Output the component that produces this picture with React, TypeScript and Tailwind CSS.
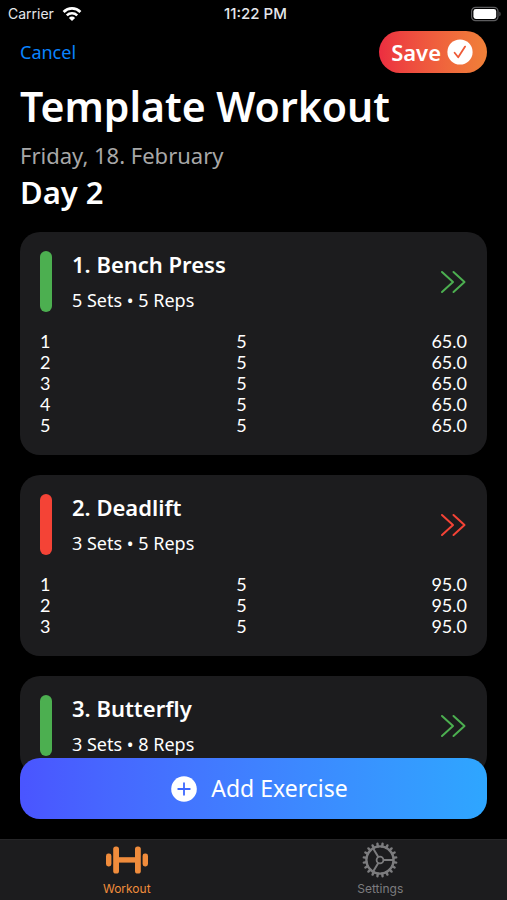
import React from "react";

type WorkoutSet = { reps: number; weight: string };

type Exercise = {
  name: string;
  sets: number;
  reps: number;
  accent: "green" | "red";
  rows: WorkoutSet[];
};

const exercises: Exercise[] = [
  {
    name: "Bench Press",
    sets: 5,
    reps: 5,
    accent: "green",
    rows: Array.from({ length: 5 }, () => ({ reps: 5, weight: "65.0" })),
  },
  {
    name: "Deadlift",
    sets: 3,
    reps: 5,
    accent: "red",
    rows: Array.from({ length: 3 }, () => ({ reps: 5, weight: "95.0" })),
  },
  { name: "Butterfly", sets: 3, reps: 8, accent: "green", rows: [] },
];

const accents = {
  green: { bar: "bg-[#4caf50]", icon: "text-[#4caf50]" },
  red: { bar: "bg-[#f44336]", icon: "text-[#f44336]" },
};

const StatusBar = () => (
  <div className="grid grid-cols-3 items-center h-7 pl-2 pr-1 font-['Inter',sans-serif] text-sm text-gray-200">
    <div className="flex items-center gap-2">
      <span>Carrier</span>
      <svg viewBox="0 0 20 15" className="w-5 h-4 text-white" fill="none" stroke="currentColor">
        <path d="M1.6 5.4a12 12 0 0 1 16.8 0" strokeWidth="2.8" />
        <path d="M4.8 8.8a7.4 7.4 0 0 1 10.4 0" strokeWidth="2.5" />
        <path d="M10 14.6 6.9 11.4a4.4 4.4 0 0 1 6.2 0Z" fill="currentColor" stroke="none" />
      </svg>
    </div>
    <span className="text-center text-[15px] font-medium">11:22 PM</span>
    <svg viewBox="0 0 32 15" className="w-8 h-4 justify-self-end" fill="none">
      <rect x="0.6" y="0.8" width="26.4" height="13.4" rx="4" stroke="#5c5c5e" strokeWidth="1.2" />
      <rect x="2.4" y="2.6" width="22.8" height="9.8" rx="2.4" fill="#fff" />
      <path d="M28.4 5.2c1.6.5 1.6 4.1 0 4.6Z" fill="#5c5c5e" />
    </svg>
  </div>
);

const CheckCircle = () => (
  <svg viewBox="0 0 26 26" className="w-[26px] h-[26px]" fill="none">
    <circle cx="13" cy="13" r="12.6" fill="#fff" />
    <path d="m7.6 13.8 3.6 4.4 6.9-10.6" stroke="#ee5a37" strokeWidth="1.8" strokeLinecap="round" strokeLinejoin="round" />
  </svg>
);

const PlusCircle = () => (
  <svg viewBox="0 0 26 26" className="w-[26px] h-[26px]" fill="none">
    <circle cx="13" cy="13" r="12.8" fill="#fff" />
    <path d="M13 7.2v11.6M7.2 13h11.6" stroke="#3d68ff" strokeWidth="1.8" strokeLinecap="round" />
  </svg>
);

const DoubleChevron = () => (
  <svg viewBox="0 0 26 24" className="w-[26px] h-6" fill="none" stroke="currentColor" strokeWidth="2" strokeLinecap="round" strokeLinejoin="round">
    <path d="m2 2 11 10L2 22M13.5 2l11 10-11 10" />
  </svg>
);

const Dumbbell = () => (
  <svg viewBox="0 0 42 28" className="w-[42px] h-7" fill="currentColor">
    <rect x="0" y="7.6" width="5.4" height="12.8" rx="2.4" />
    <rect x="7.2" y="0.4" width="5.8" height="27.2" rx="2.6" />
    <rect x="11" y="11.2" width="20" height="5.4" />
    <rect x="29" y="0.4" width="5.8" height="27.2" rx="2.6" />
    <rect x="36.6" y="7.6" width="5.4" height="12.8" rx="2.4" />
  </svg>
);

const Gear = () => (
  <svg viewBox="0 0 36 36" className="w-9 h-9" fill="none" stroke="currentColor">
    <circle cx="18" cy="18" r="13.6" strokeWidth="2.4" />
    <circle cx="18" cy="18" r="3.4" strokeWidth="1.8" />
    <path d="M21.4 18h10.4M16.3 15 11 6.2M16.3 21 11 29.8" strokeWidth="2" />
    {Array.from({ length: 20 }, (_, i) => (
      <path key={i} d="M18 1.6v2.8" strokeWidth="2.4" strokeLinecap="round" transform={`rotate(${i * 18 + 9} 18 18)`} />
    ))}
  </svg>
);

const ExerciseCard = ({ exercise, index }: { exercise: Exercise; index: number }) => {
  const accent = accents[exercise.accent];

  return (
    <li className="flex flex-col gap-[19px] px-5 py-[19px] rounded-[20px] bg-[#1c1c1e]">
      <div className="flex">
        <div className={`w-3 h-[61px] rounded-full ${accent.bar}`} />
        <div className="flex-1 ml-5 flex flex-col gap-[11px]">
          <h3 className="text-[22px] leading-[26px] font-semibold">
            {index + 1}. {exercise.name}
          </h3>
          <p className="text-[18px] leading-6">
            {exercise.sets} Sets • {exercise.reps} Reps
          </p>
        </div>
        <button className={`px-px ${accent.icon}`} aria-label={`Open ${exercise.name}`}>
          <DoubleChevron />
        </button>
      </div>

      {exercise.rows.length > 0 && (
        <table className="w-full font-['Lato',sans-serif] text-[18px] leading-[21px]">
          <tbody>
            {exercise.rows.map((row, i) => (
              <tr key={i}>
                <td className="w-3 p-0">{i + 1}</td>
                <td className="p-0 text-center">{row.reps}</td>
                <td className="w-9 p-0 text-right">{row.weight}</td>
              </tr>
            ))}
          </tbody>
        </table>
      )}
    </li>
  );
};

const TabBar = () => (
  <nav className="grid grid-cols-2 h-[61px] bg-[#1c1c1e] border-t border-[#262628] font-['Inter',sans-serif] text-xs leading-4">
    <a href="#workout" className="flex flex-col items-center justify-between pt-[6px] pb-[3px] text-[#f08c3c]">
      <Dumbbell />
      Workout
    </a>
    <a href="#settings" className="flex flex-col items-center justify-between pt-[2px] pb-[3px] text-[#7c7c7e]">
      <Gear />
      Settings
    </a>
  </nav>
);

const App = () => {
  return (
    <div className="flex flex-col h-screen bg-black text-white font-['Noto_Sans',sans-serif]">
      <StatusBar />

      <main className="relative flex-1 min-h-0 overflow-hidden px-5">
        <div className="flex items-center justify-between pt-[3px]">
          <button className="text-[18px] leading-6 text-[#0a84ff]">Cancel</button>
          <button className="flex items-center gap-1.5 h-[42px] pl-3 pr-3.5 rounded-full bg-gradient-to-r from-[#ec2d40] to-[#f08038] text-[22px] font-semibold">
            Save
            <CheckCircle />
          </button>
        </div>

        <header className="pt-2">
          <h1 className="text-[41px] leading-[50px] font-semibold">Template Workout</h1>
          <p className="pt-2 text-[22px] leading-8 text-[#a8a8a8]">Friday, 18. February</p>
          <h2 className="text-[31px] leading-[42px] font-semibold">Day 2</h2>
        </header>

        <ul className="flex flex-col gap-5 pt-[19px]">
          {exercises.map((exercise, index) => (
            <ExerciseCard key={exercise.name} exercise={exercise} index={index} />
          ))}
        </ul>

        {/* Floats over the list, just above the tab bar */}
        <button className="absolute inset-x-5 bottom-5 flex items-center justify-center gap-3.5 h-[61px] pl-3 rounded-[20px] bg-gradient-to-r from-[#4a55ff] to-[#2ea6ff] text-[23px]">
          <PlusCircle />
          Add Exercise
        </button>
      </main>

      <TabBar />
    </div>
  );
};

export default App;
